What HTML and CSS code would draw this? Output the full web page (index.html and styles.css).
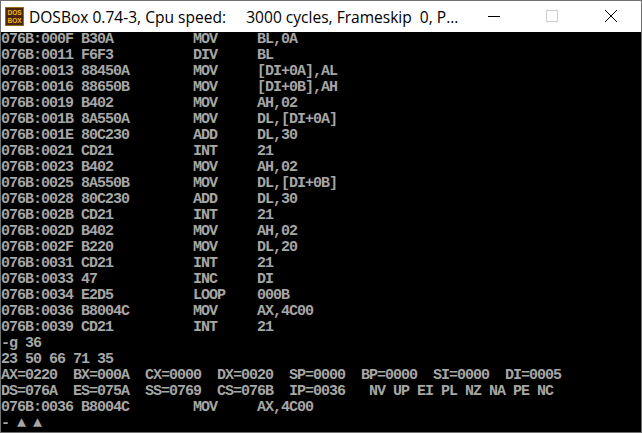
FILE: index.html
```html
<!DOCTYPE html>
<html lang="en">
<head>
<meta charset="utf-8">
<title>DOSBox</title>
<link rel="stylesheet" href="styles.css">
</head>
<body>
<div class="window">
  <header class="titlebar">
    <div class="logo"><span>DOS</span><span>BOX</span></div>
    <div class="title">DOSBox 0.74-3, Cpu speed: &nbsp; &nbsp; 3000 cycles, Frameskip &nbsp;0, P...</div>
    <div class="controls">
      <svg class="ctl" width="58" height="31" viewBox="0 0 58 31"><path d="M24 15.5H36" stroke="#000" fill="none"/></svg>
      <svg class="ctl" width="58" height="31" viewBox="0 0 58 31"><rect x="23.5" y="9.5" width="11" height="11" stroke="#ccc" fill="none"/></svg>
      <svg class="ctl" width="58" height="31" viewBox="0 0 58 31"><path d="M23 9L35 21M35 9L23 21" stroke="#000" fill="none"/></svg>
    </div>
  </header>
<pre class="screen">076B:000F B30A          MOV     BL,0A
076B:0011 F6F3          DIV     BL
076B:0013 88450A        MOV     [DI+0A],AL
076B:0016 88650B        MOV     [DI+0B],AH
076B:0019 B402          MOV     AH,02
076B:001B 8A550A        MOV     DL,[DI+0A]
076B:001E 80C230        ADD     DL,30
076B:0021 CD21          INT     21
076B:0023 B402          MOV     AH,02
076B:0025 8A550B        MOV     DL,[DI+0B]
076B:0028 80C230        ADD     DL,30
076B:002B CD21          INT     21
076B:002D B402          MOV     AH,02
076B:002F B220          MOV     DL,20
076B:0031 CD21          INT     21
076B:0033 47            INC     DI
076B:0034 E2D5          LOOP    000B
076B:0036 B8004C        MOV     AX,4C00
076B:0039 CD21          INT     21
-g 36
23 50 66 71 35
AX=0220  BX=000A  CX=0000  DX=0020  SP=0000  BP=0000  SI=0000  DI=0005
DS=076A  ES=075A  SS=0769  CS=076B  IP=0036   NV UP EI PL NZ NA PE NC
076B:0036 B8004C        MOV     AX,4C00
- ▲ ▲</pre>
</div>
</body>
</html>
```
FILE: styles.css
```css
* { box-sizing: border-box; }
html, body { margin: 0; padding: 0; background: #fff; }
body { width: 642px; height: 433px; overflow: hidden; }
.window {
  width: 642px;
  height: 433px;
  display: flex;
  flex-direction: column;
  border: 1px solid #707070;
  background: #fff;
}
.titlebar {
  height: 31px;
  flex: none;
  display: flex;
  align-items: center;
  padding-left: 4px;
  background: #fff;
}
.logo {
  width: 19px;
  height: 19px;
  flex: none;
  display: flex;
  flex-direction: column;
  align-items: center;
  justify-content: center;
  background: #4a2408;
  border: 1px solid #9a6a14;
  font-family: "Liberation Sans", sans-serif;
  font-size: 6.5px;
  font-weight: bold;
  line-height: 8px;
  color: #f2b820;
}
.title {
  margin-left: 5px;
  flex: 1;
  font-family: "Open Sans", sans-serif;
  font-size: 15.55px;
  color: #000;
  white-space: nowrap;
  overflow: hidden;
}
.controls { display: flex; flex: none; gap: 1px; padding-right: 1px; }
.ctl { display: block; flex: none; }
.screen {
  margin: 0;
  width: 640px;
  height: 400px;
  background: #000;
  color: #a6a6a6;
  font-family: "Liberation Mono", monospace;
  font-size: 15px;
  font-weight: bold;
  letter-spacing: -1px;
  line-height: 16px;
  overflow: hidden;
}
```
